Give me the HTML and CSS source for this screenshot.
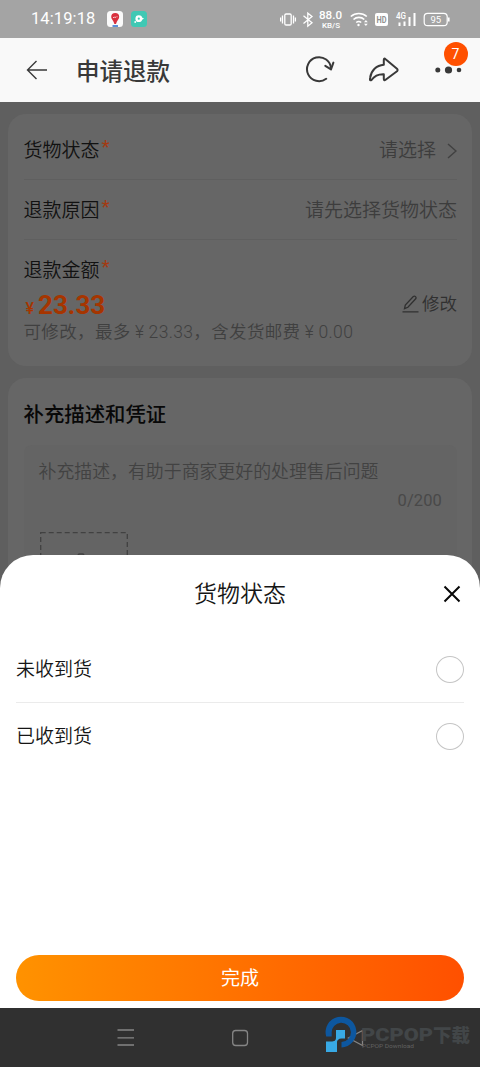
FILE: index.html
```html
<!DOCTYPE html>
<html lang="zh-CN">
<head>
<meta charset="utf-8">
<meta name="viewport" content="width=device-width, initial-scale=1">
<title>申请退款</title>
<link rel="stylesheet" href="styles.css">
</head>
<body>
<div class="screen">
  <div class="status">
    <span class="clock">14:19:18</span>
    <svg class="app-icon" width="16" height="16" viewBox="0 0 16 16"><rect width="16" height="16" rx="3.5" fill="#fafafa"/><path d="M5.5 14h5.5v2H5.5z" fill="#5c8fd8"/><path d="M8.2 2a4 4 0 0 1 4 4c0 2-2.4 3.6-3.2 7H7.4C6.600 9.600 4.200 8 4.200 6a4 4 0 0 1 4-4z" fill="#d9303e"/><path d="M6 6.500h1.500M8 5.500l.5 1.500M9.500 5.800h1" stroke="#fbdada" stroke-width=".9"/></svg>
    <svg class="app-icon app-icon-chat" width="16" height="16" viewBox="0 0 16 16"><rect width="16" height="16" rx="3.500" fill="#40c8b4"/><circle cx="7.800" cy="7.700" r="3.400" fill="#fff"/><circle cx="4.200" cy="11" r=".9" fill="#fff"/><path d="M10 6l3 1.500-3 2z" fill="#fff"/><circle cx="7.800" cy="7.700" r="1.100" fill="#40c8b4"/></svg>
    <svg class="signals" width="172" height="24" viewBox="0 0 172 24" fill="none" stroke="#fff" stroke-width="1.300">
      <rect x="4.800" y="7" width="6.400" height="11" rx="1.300"/><path d="M2.500 8.500v8M.6 10.500v4M13.500 8.500v8M15.400 10.500v4"/>
      <path d="M23.500 8.800l8.500 7-4.200 3.400V6.200l4.200 3.300-8.500 7"/>
      <g class="signal-text"><text x="39" y="12.300" textLength="23" lengthAdjust="spacingAndGlyphs" font-size="10.500">88.0</text><text x="42" y="20.800" textLength="18" lengthAdjust="spacingAndGlyphs" font-size="8">KB/S</text></g>
      <path d="M70.800 9.500a12 12 0 0 1 16 0M73.500 12.500a8 8 0 0 1 10.800 0M76.200 15.500a4 4 0 0 1 5 0" stroke-width="1.600"/><circle cx="78.500" cy="18" r="1.200" fill="#fff" stroke="none"/><path d="M84 15.200l1.900-2.200 1.900 2.200zM84 16.800l1.900 2.200 1.900-2.200z" fill="#fff" stroke="none"/>
      <rect x="95" y="6" width="13" height="13" rx="2" fill="#fff" stroke="none"/><text x="96.500" y="15.800" textLength="10" lengthAdjust="spacingAndGlyphs" class="hd" font-size="9.500">HD</text>
      <g class="signal-text"><text x="116" y="12" textLength="10" lengthAdjust="spacingAndGlyphs" font-size="9">4G</text></g>
      <path d="M119.500 15.500V19M124.500 14.500V19M129.500 10V19M134.500 6V19" stroke-width="2"/>
      <rect x="144.200" y="6.300" width="23" height="12.400" rx="3.500" stroke-width="1.200"/><path d="M168.800 10.500v4" stroke-width="1.600"/>
      <text x="150.500" y="16" textLength="10.500" class="battery" font-size="9.500">95</text>
    </svg>
  </div>

  <header class="header">
    <svg class="back" width="22" height="22" viewBox="0 0 22 22"><path d="M21 11H1.500M10.500 2L1.500 11l9 9"/></svg>
    <h1 class="title">申请退款</h1>
    <svg class="tool" width="30" height="28" viewBox="0 0 30 28"><path d="M21.200 22.800A12 12 0 1 1 26 12.600"/><path d="M20.300 9.800l5.700 3.600 2.400-6.800"/></svg>
    <svg class="tool share" width="30" height="28" viewBox="0 0 30 28"><path d="M14.800 3.900q0-2.300 1.800-.7L28 12.800q1.200 1.200 0 2.400L16.600 23.800q-1.800 1.300-1.800-1v-4.600C9 18 5.500 19.600 2.700 23.800 .5 25.300.900 23.300 1.200 21.500 2.200 14.500 7.200 9.300 14.800 8.700z"/></svg>
    <div class="more">
      <svg width="28" height="10" viewBox="0 0 28 10"><circle cx="2.800" cy="5" r="2.500"/><circle cx="13.500" cy="5" r="3.600"/><circle cx="24" cy="5" r="2.300"/></svg>
      <span class="badge">7</span>
    </div>
  </header>

  <main class="page">
    <section class="card">
      <div class="row"><span class="label">货物状态<i>*</i></span><span class="value">请选择<svg class="chevron" width="10" height="16" viewBox="0 0 10 16"><path d="M1 1l8 7-8 7"/></svg></span></div>
      <div class="row"><span class="label">退款原因<i>*</i></span><span class="value">请先选择货物状态</span></div>
      <div class="amount-label"><span class="label">退款金额<i>*</i></span></div>
      <div class="amount">
        <span class="price"><small>¥</small>23.33</span>
        <span class="edit"><svg width="17" height="18" viewBox="0 0 17 18"><path d="M.5 16.800h16M2.500 13.700l.8-3.700 8-8.500q1.200-.9 2.200.1t.2 2.200L5.900 12.300z"/></svg>修改</span>
      </div>
      <p class="note">可修改，最多<span class="yen">¥</span>23.33，含发货邮费<span class="yen">¥</span>0.00</p>
    </section>
    <section class="card evidence">
      <h2 class="subtitle">补充描述和凭证</h2>
      <div class="textbox">
        <p class="placeholder">补充描述，有助于商家更好的处理售后问题</p>
        <p class="counter">0/200</p>
        <div class="upload"><svg width="88" height="60" viewBox="0 0 88 60"><rect x=".7" y=".7" width="86.600" height="70" stroke-dasharray="5 3"/><path d="M37 24.500l2-2.500h4l2 2.500"/></svg></div>
      </div>
    </section>
  </main>

  <section class="sheet">
    <div class="sheet-head"><h2 class="sheet-title">货物状态</h2><svg class="close" width="18" height="18" viewBox="0 0 18 18"><path d="M1.500 1.500l15 15M16.500 1.500l-15 15"/></svg></div>
    <div class="option"><span>未收到货</span><span class="radio"></span></div>
    <div class="option"><span>已收到货</span><span class="radio"></span></div>
    <button class="done">完成</button>
  </section>

  <nav class="nav">
    <svg width="480" height="59" viewBox="0 0 480 59">
      <g fill="none" stroke="#858585" stroke-width="1.300"><path d="M117.500 22h16.500M117.500 29.800h16.500M117.500 37h16.500"/><rect x="232.700" y="22.500" width="14.800" height="15" rx="3"/><path d="M362.500 22.500L348.500 30l14 7.500z"/></g>
      <path d="M326.200 28.500A15.400 15.400 0 1 1 341.500 39.500V34A9.600 9.600 0 1 0 331.700 25V28.500z" fill="#0d579f"/>
      <path d="M336 22h9v8.500h-3.500c-3 0-4.500 2-4.500 3.500V44h-11V33.500h5c3.500 0 5-1 5-4z" fill="#38a9e4"/>
      <text class="mark" x="361" y="33" textLength="72" lengthAdjust="spacingAndGlyphs">PCPOP</text>
      <text class="mark-cn" x="433" y="33.500" textLength="37">下载</text>
      <text class="mark-sub" x="362" y="39.500" textLength="52" lengthAdjust="spacingAndGlyphs">PCPOP Download</text>
    </svg>
  </nav>
</div>
</body>
</html>
```
FILE: styles.css
```css
* { box-sizing: border-box; }
body { margin: 0; font-family: Roboto, "Noto Sans CJK SC", sans-serif; }
h1, h2, p { margin: 0; font-weight: 400; }
.screen { position: relative; display: flex; flex-direction: column; width: 480px; height: 1067px; overflow: hidden; background: #5f5f5f; }

.status { display: flex; align-items: center; flex: none; height: 37.500px; padding-left: 31px; background: #a4a4a4; color: #fff; }
.clock { width: 76px; font-size: 16.500px; letter-spacing: .1px; white-space: nowrap; }
.app-icon-chat { margin-left: 8px; }
.signals { margin-left: 133px; }
.signal-text { fill: #fff; stroke: none; font-weight: 500; }
.hd { fill: #909090; stroke: none; font-weight: 700; }
.battery { fill: #fff; stroke: none; }

.header { display: flex; align-items: center; flex: none; height: 64px; padding-left: 26px; background: #f9f9f9; color: #393939; }
.back { fill: none; stroke: #393939; stroke-width: 1.400; }
.title { width: 228px; padding: 5px 0 0 28px; font-size: 23.500px; font-weight: 500; line-height: 34px; }
.tool { flex: none; fill: none; stroke: #393939; stroke-width: 2; stroke-linecap: round; stroke-linejoin: round; margin-left: 29px; }
.share { margin-left: 34px; }
.more { position: relative; display: flex; align-items: center; width: 34px; height: 64px; margin-left: 36px; fill: #393939; }
.badge { position: absolute; left: 8.500px; top: 4px; width: 24px; height: 24px; border-radius: 50%; background: #ff5000; color: #fff; font-size: 14px; line-height: 24px; text-align: center; }

.page { display: flex; flex-direction: column; gap: 12px; padding: 12.500px 8px 0; }
.card { height: 252px; padding: 6px 15px 0 15.500px; border-radius: 18px; background: #666; }
.row { display: flex; align-items: center; justify-content: space-between; height: 60px; padding-top: 3px; border-bottom: 1px solid #5f5f5f; color: #3d3d3d; }
.label { display: flex; color: #111; font-size: 19px; font-weight: 350; line-height: 28px; }
.label i { padding-left: 2px; color: #a33a12; font-style: normal; font-size: 19px; font-weight: 400; line-height: 20px; }
.value { display: flex; align-items: center; font-size: 19px; font-weight: 350; line-height: 28px; }
.chevron { margin-left: 11px; fill: none; stroke: #414141; stroke-width: 1.500; }
.amount-label { height: 48px; padding-top: 17px; }
.amount { display: flex; align-items: center; justify-content: space-between; height: 32px; }
.price { color: #a63500; font-size: 26px; font-weight: 700; line-height: 34px; padding: 5px 0 0 2px; }
.price small { padding-right: 4px; font-size: 16px; font-weight: 500; }
.edit { display: flex; align-items: center; gap: 3px; color: #303030; font-size: 17.500px; font-weight: 350; line-height: 26px; }
.edit svg { fill: none; stroke: #303030; stroke-width: 1.300; }
.note { color: #404040; font-size: 17.500px; font-weight: 350; line-height: 24px; letter-spacing: .35px; white-space: nowrap; }
.yen { display: inline-block; width: 18px; text-align: center; }
.evidence { padding-top: 21px; }
.subtitle { color: #080808; font-size: 20.400px; font-weight: 500; line-height: 32px; }
.textbox { height: 200px; margin-top: 14px; padding: 14px 15px 0; border-radius: 8px; background: #646464; }
.placeholder { color: #424242; font-size: 17.900px; font-weight: 350; line-height: 26px; white-space: nowrap; }
.counter { color: #494949; font-size: 16.500px; line-height: 32px; letter-spacing: .1px; text-align: right; }
.upload { padding: 15px 0 0 1px; }
.upload svg { fill: none; stroke: #414141; stroke-width: 1.300; }

.sheet { position: absolute; left: 0; top: 555px; width: 480px; height: 453px; padding: 0 16px; border-radius: 33px 33px 0 0; background: #fff; color: #151515; }
.sheet-head { display: grid; grid-template-columns: 18px 1fr 18px; align-items: center; height: 80px; padding: 0 3px 2px 0; }
.sheet-title { grid-column: 2; padding: 2px 0 0 3px; font-size: 23px; font-weight: 350; line-height: 36px; text-align: center; }
.close { fill: none; stroke: #080808; stroke-width: 2; }
.option { display: flex; align-items: center; justify-content: space-between; height: 67px; font-size: 19px; font-weight: 350; line-height: 28px; }
.option:nth-child(2) { border-bottom: 1px solid #ebebeb; height: 68px; padding-top: 2px; }
.radio { width: 28px; height: 27px; border: 1.500px solid #c5c5c5; border-radius: 50%; }
.done { display: block; width: 448px; height: 45.500px; margin-top: 185px; padding: 0 0 2px; border: 0; border-radius: 23px; background: linear-gradient(90deg, #ff9200, #ff5000); color: #fff; font: 400 19px/42px "Noto Sans CJK SC", sans-serif; }

.nav { position: absolute; left: 0; top: 1008px; width: 480px; height: 59px; background: #303030; }
.nav svg { display: block; }
.mark { fill: #424648; font-size: 18px; font-weight: 900; }
.mark-cn { fill: #424648; font-size: 18.500px; font-weight: 900; }
.mark-sub { fill: #606060; font-size: 5.500px; }
```
